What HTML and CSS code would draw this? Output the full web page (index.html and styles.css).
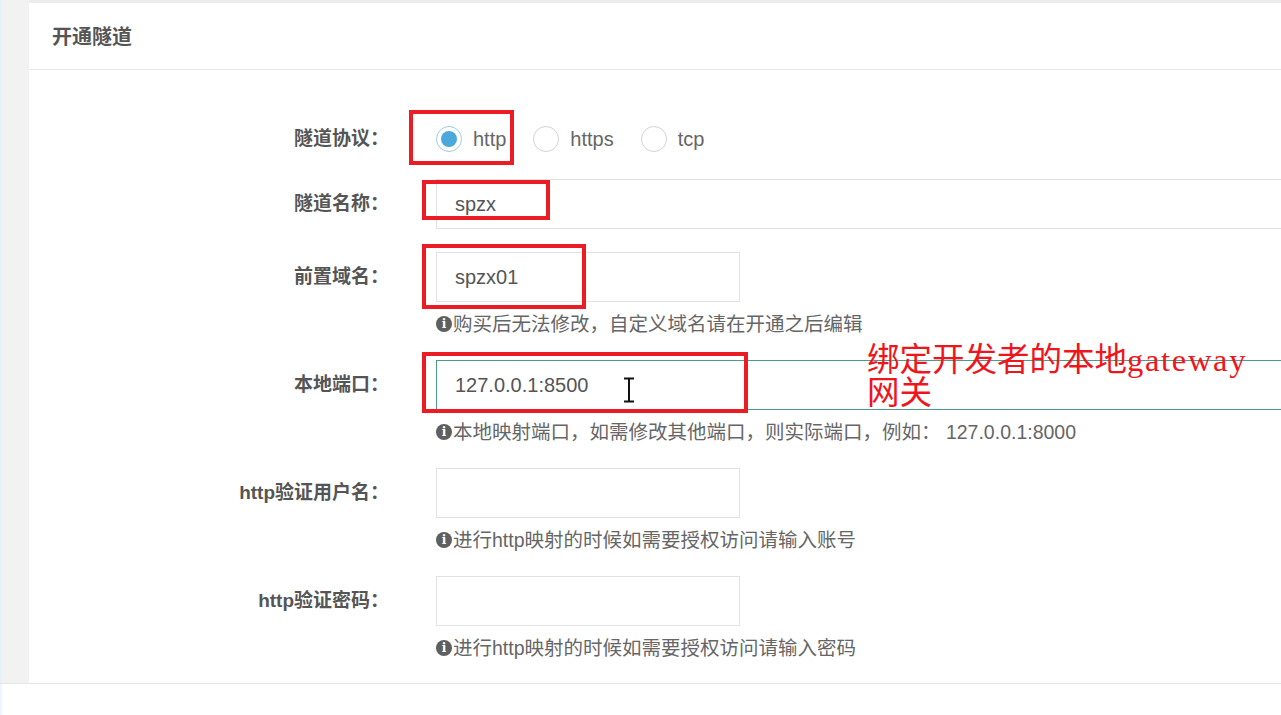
FILE: index.html
```html
<!DOCTYPE html>
<html lang="zh-CN">
<head>
    <meta charset="UTF-8">
    <meta name="viewport" content="width=device-width, initial-scale=1.0">
    <title>开通隧道</title>
    <link rel="stylesheet" href="styles.css">
</head>
<body>
    <div class="page">
        <div class="side"></div>
        <div class="main">
            <div class="card">
                <div class="card-header">开通隧道</div>

                <!-- 隧道表单 -->
                <form class="form">
                    <div class="row row-radio">
                        <label class="label">隧道协议：</label>
                        <div class="field radios">
                            <span class="radio checked"></span><span class="radio-text">http</span>
                            <span class="radio"></span><span class="radio-text">https</span>
                            <span class="radio"></span><span class="radio-text">tcp</span>
                        </div>
                    </div>

                    <div class="row row-name">
                        <label class="label">隧道名称：</label>
                        <div class="field">
                            <input type="text" class="input wide" value="spzx">
                        </div>
                    </div>

                    <div class="row">
                        <label class="label">前置域名：</label>
                        <div class="field">
                            <input type="text" class="input" value="spzx01">
                            <p class="help"><span class="info">i</span>购买后无法修改，自定义域名请在开通之后编辑</p>
                        </div>
                    </div>

                    <div class="row">
                        <label class="label">本地端口：</label>
                        <div class="field">
                            <input type="text" class="input wide focused" value="127.0.0.1:8500">
                            <p class="help"><span class="info">i</span>本地映射端口，如需修改其他端口，则实际端口，例如： 127.0.0.1:8000</p>
                        </div>
                    </div>

                    <div class="row">
                        <label class="label">http验证用户名：</label>
                        <div class="field">
                            <input type="text" class="input">
                            <p class="help"><span class="info">i</span>进行http映射的时候如需要授权访问请输入账号</p>
                        </div>
                    </div>

                    <div class="row row-last">
                        <label class="label">http验证密码：</label>
                        <div class="field">
                            <input type="password" class="input">
                            <p class="help"><span class="info">i</span>进行http映射的时候如需要授权访问请输入密码</p>
                        </div>
                    </div>
                </form>
            </div>
        </div>
    </div>
    <div class="footer"></div>

    <!-- 标注 -->
    <div class="mark mark-1"></div>
    <div class="mark mark-2"></div>
    <div class="mark mark-3"></div>
    <div class="mark mark-4"></div>
    <div class="note">绑定开发者的本地<span class="latin">gateway</span><br>网关</div>
    <svg class="cursor" width="12" height="26" viewBox="0 0 12 26">
        <path d="M1 1.5h10M6 1.5v23M1 24.5h10" stroke="#111" stroke-width="2" fill="none"/>
    </svg>
</body>
</html>
```

FILE: styles.css
```css
body {
    margin: 0;
    font-family: "Liberation Sans", "Noto Sans CJK SC", sans-serif;
    background: #fff;
    overflow: hidden;
}
.page {
    display: flex;
    border-bottom: 1px solid #e6e6e6;
}
.side {
    width: 29px;
    flex-shrink: 0;
    background: linear-gradient(to right, #e6f0fb 0, #eef2f6 3px, #f2f2f2 4px);
}
.main {
    flex: 1;
    min-width: 0;
    padding-top: 3px;
    background: #ececec;
}
.card {
    background: #fff;
}
.card-header {
    height: 66px;
    line-height: 68px;
    padding: 0 23px;
    border-bottom: 1px solid #e8e8e8;
    font-size: 20px;
    font-weight: bold;
    color: #555;
}
.form {
    margin: 0;
    padding: 44px 0 23px;
}
.row {
    display: flex;
    align-items: flex-start;
    margin-bottom: 24px;
}
.row-radio {
    margin-bottom: 15px;
}
.row-name {
    margin-bottom: 23px;
}
.row-last {
    margin-bottom: 0;
}
.label {
    width: 360px;
    margin-right: 47px;
    flex-shrink: 0;
    text-align: right;
    line-height: 50px;
    font-size: 19px;
    font-weight: bold;
    color: #555;
}
.field {
    min-width: 0;
}
.radios {
    display: flex;
    align-items: center;
    height: 50px;
}
.radio {
    width: 24px;
    height: 24px;
    border: 1px solid #d2d2d2;
    border-radius: 50%;
    box-sizing: content-box;
    position: relative;
}
.radio.checked {
    border-color: #9fcbe3;
}
.radio.checked::after {
    content: "";
    position: absolute;
    left: 4px;
    top: 4px;
    width: 16px;
    height: 16px;
    border-radius: 50%;
    background: #4aa8da;
}
.radio-text {
    margin: 0 27px 0 11px;
    font-size: 20px;
    color: #666;
}
.input {
    display: block;
    width: 304px;
    height: 50px;
    box-sizing: border-box;
    margin: 0;
    padding: 0 18px;
    border: 1px solid #e2e2e2;
    outline: none;
    font-family: "Liberation Sans", sans-serif;
    font-size: 20px;
    color: #555;
    background: #fff;
}
.input.wide {
    width: 900px;
}
.input.focused {
    border-color: #4a9c8b;
}
.help {
    display: flex;
    align-items: center;
    margin: 10px 0 0;
    height: 24px;
    line-height: 24px;
    font-size: 19.5px;
    color: #666;
    white-space: nowrap;
}
.info {
    width: 16px;
    height: 16px;
    margin-right: 1px;
    border-radius: 50%;
    background: #5f5f5f;
    color: #fff;
    font-family: "DejaVu Serif", serif;
    font-weight: bold;
    font-size: 12px;
    line-height: 16px;
    text-align: center;
    flex-shrink: 0;
}
.footer {
    height: 40px;
    background: linear-gradient(to right, #eaf2fc 0, #ffffff 3px);
}

/* annotations over the screenshot */
.mark {
    position: absolute;
    border: 4px solid #ec1c24;
    box-sizing: border-box;
}
.mark-1 {
    left: 409px;
    top: 110px;
    width: 105px;
    height: 55px;
}
.mark-2 {
    left: 422px;
    top: 180px;
    width: 128px;
    height: 40px;
}
.mark-3 {
    left: 422px;
    top: 244px;
    width: 164px;
    height: 65px;
}
.mark-4 {
    left: 422px;
    top: 352px;
    width: 326px;
    height: 61px;
}
.note {
    position: absolute;
    left: 867px;
    top: 344px;
    font-family: "Liberation Serif", "Noto Sans CJK SC", serif;
    font-size: 32.5px;
    line-height: 33px;
    color: #f0141c;
}
.note .latin {
    letter-spacing: 1.7px;
}
.cursor {
    position: absolute;
    left: 623px;
    top: 377px;
}
```
